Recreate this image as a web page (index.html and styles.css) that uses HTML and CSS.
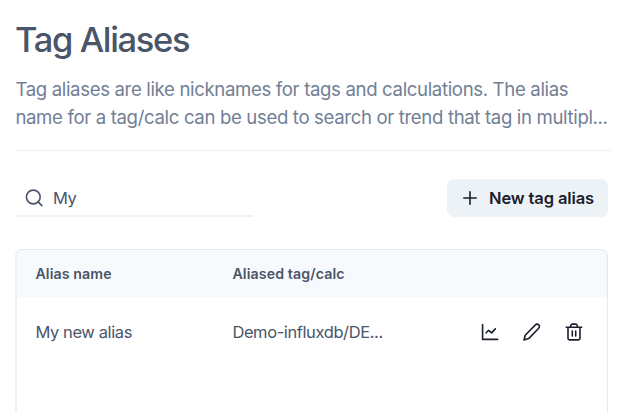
FILE: index.html
```html
<!DOCTYPE html>
<html lang="en">
<head>
<meta charset="utf-8">
<title>Tag Aliases</title>
<link rel="stylesheet" href="styles.css">
</head>
<body>
<main class="page">
  <header class="intro">
    <h1 class="title"><span>Tag Aliases</span></h1>
    <p class="description"><span>Tag aliases are like nicknames for tags and calculations. The alias</span><br><span>name for a tag/calc can be used to search or trend that tag in multipl...</span></p>
  </header>
  <div class="toolbar">
    <div class="search">
      <svg class="search-icon" viewBox="0 0 18 18"><circle cx="8.3" cy="8" r="6.9"/><path d="M13.2 12.9 16.8 16.6"/></svg>
      <span>My</span>
    </div>
    <button class="new-button">
      <svg class="plus-icon" viewBox="0 0 14 14"><path d="M7 .8v12.4M.8 7h12.4"/></svg>
      <span>New tag alias</span>
    </button>
  </div>
  <section class="table">
    <div class="row head"><span>Alias name</span><span>Aliased tag/calc</span></div>
    <div class="row body">
      <span>My new alias</span>
      <span class="tag">Demo-influxdb/DE...</span>
      <div class="actions">
        <svg class="icon" viewBox="0 0 18 18"><path d="M1.6 1.5v14.9H16.7"/><path d="M5.2 9.8 7.6 7.3l3 2.6 3.7-4"/></svg>
        <svg class="icon" viewBox="0 0 18 18"><path d="M1 17 2.2 12.3 12.4 1.9a2.2 2.2 0 0 1 3.3 0 2.2 2.2 0 0 1 0 3.3L5.7 15.6Z"/></svg>
        <svg class="icon" viewBox="0 0 18 18"><path d="M1.3 4.3h15.4M5.2 4.1l1-2.3q.3-.7 1.1-.7h3.4q.8 0 1.1.7l1 2.3M3 4.5v10.8q0 1.6 1.6 1.6h8.8q1.6 0 1.6-1.6V4.5M7.3 8v5M10.7 8v5"/></svg>
      </div>
    </div>
  </section>
</main>
</body>
</html>
```
FILE: styles.css
```css
* {
  box-sizing: border-box;
}

body {
  margin: 0;
  height: 412px;
  overflow: hidden;
  background: #fff;
  color: #4a5568;
  font-family: Inter, "Liberation Sans", sans-serif;
}

.page {
  padding: 0 26px 0 15px;
}

.intro {
  height: 151px;
  margin-right: -4px;
  padding-top: 18px;
  border-bottom: 1px solid #edf2f7;
}

.title {
  margin: 0 0 13px;
  font-size: 34.5px;
  font-weight: 500;
  line-height: 44px;
  letter-spacing: -1.35px;
  white-space: nowrap;
}

.description {
  margin: 0;
  padding-left: 0.4px;
  color: #718096;
  font-size: 18.6px;
  line-height: 28px;
  letter-spacing: -0.35px;
  white-space: nowrap;
}

.toolbar {
  display: flex;
  justify-content: space-between;
  padding-top: 28px;
}

.search {
  display: flex;
  align-items: center;
  gap: 10px;
  width: 238px;
  height: 38px;
  padding: 1px 0 0 10px;
  border-bottom: 2px solid #edf2f7;
  font-size: 16.5px;
  letter-spacing: -0.4px;
}

.search-icon {
  width: 18px;
  height: 18px;
}

svg {
  fill: none;
  stroke: currentColor;
  stroke-width: 1.6;
  stroke-linecap: round;
  stroke-linejoin: round;
}

.new-button {
  display: flex;
  align-items: center;
  gap: 12px;
  width: 161px;
  height: 38px;
  padding: 0 0 0 16px;
  border: 0;
  border-radius: 7px;
  background: #edf2f7;
  color: #1a202c;
  font: 600 16.5px Inter, "Liberation Sans", sans-serif;
  letter-spacing: -0.12px;
  white-space: nowrap;
}

.plus-icon {
  width: 14px;
  height: 14px;
}

.table {
  height: 180px;
  margin-top: 32px;
  border: 1px solid #e2e8f0;
  border-left: 2px solid #edf2f7;
  border-radius: 7px;
  overflow: hidden;
}

.row {
  display: grid;
  grid-template-columns: 197px 249px 1fr;
  align-items: center;
  padding-left: 18.4px;
  white-space: nowrap;
}

.head {
  height: 47px;
  background: #f7fafc;
  font-size: 14.2px;
  font-weight: 600;
  letter-spacing: 0.11px;
}

.body {
  height: 70px;
  font-size: 16.5px;
  letter-spacing: -0.4px;
}

.actions {
  display: flex;
  gap: 24px;
  color: #1a202c;
}

.icon {
  width: 18px;
  height: 18px;
}
```
